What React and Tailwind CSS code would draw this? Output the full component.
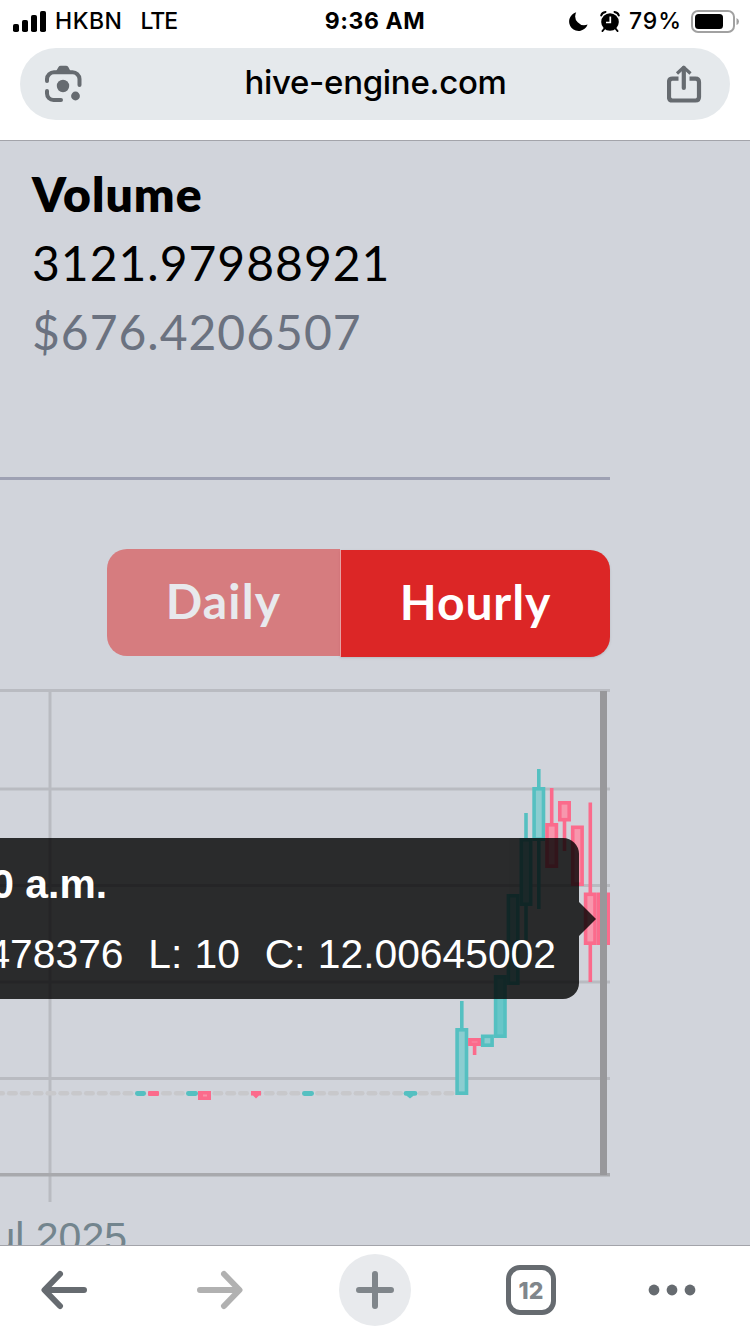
const GREY = "#666b70";
const TEAL = "#55c0c1";
const PINK = "#fb6b8c";

// x is the centre of the candle
const candles = [
  { x: 461.8, top: 1028, bottom: 1095, high: 1001, low: 1095, up: true },
  { x: 474.6, top: 1038, bottom: 1046, high: 1038, low: 1055, up: false },
  { x: 487.4, top: 1034.5, bottom: 1047, high: 1035, low: 1047, up: true },
  { x: 500.3, top: 975, bottom: 1038, high: 975, low: 1038, up: true, dense: true },
  { x: 513.1, top: 894, bottom: 985, high: 894, low: 985, up: true },
  { x: 526, top: 838, bottom: 906, high: 813, low: 940, up: true },
  { x: 538.8, top: 787, bottom: 841, high: 769, low: 909, up: true },
  { x: 551.7, top: 823, bottom: 868, high: 788, low: 868, up: false },
  { x: 564.5, top: 801, bottom: 821.5, high: 801, low: 851, up: false },
  { x: 577.4, top: 825.5, bottom: 886, high: 826, low: 886, up: false },
  { x: 590.3, top: 892.5, bottom: 945, high: 802.5, low: 982, up: false },
  { x: 603.5, top: 892.5, bottom: 945, high: 892.5, low: 945, up: false, dense: true },
];

const emptyHours = Array.from({ length: 36 }, (_, i) => 461.8 - 12.84 * (i + 1));

function Candle({ x, top, bottom, high, low, up, dense }) {
  const color = up ? TEAL : PINK;
  let fill = up ? "#8bcdd0" : "#f797ad";
  if (dense) fill = up ? "#68c6c8" : "#f9809b";
  return (
    <g stroke={ color } strokeWidth="3.6">
      <line x1={ x } x2={ x } y1={ high } y2={ low } />
      <rect x={ x - 4.7 } y={ top + 1.8 } width="9.4" height={ bottom - top - 3.6 } fill={ fill } />
    </g>
  );
}

function PriceChart() {
  return (
    <svg viewBox="0 680 610 530" className="block w-[610px] h-[530px]">
      <g stroke="#b9bbc1" strokeWidth="3">
        <line x1="0" x2="610" y1="690.5" y2="690.5" />
        <line x1="0" x2="610" y1="789" y2="789" />
        <line x1="0" x2="610" y1="885.5" y2="885.5" />
        <line x1="0" x2="610" y1="982" y2="982" />
        <line x1="0" x2="610" y1="1078.5" y2="1078.5" />
        <line x1="50" x2="50" y1="690" y2="1202" />
      </g>
      <line x1="0" x2="610" y1="1174.8" y2="1174.8" stroke="#a8a9ad" strokeWidth="3.4" />

      { emptyHours.map((x) => (
        <rect key={ x } x={ x - 5.5 } y="1091" width="11" height="4.6" rx="2.3" fill="#c8c8cb" />
      )) }

      <g fill={ TEAL }>
        <rect x="135" y="1091" width="11" height="5" rx="2.4" />
        <rect x="186" y="1091" width="12" height="5" rx="2.4" />
        <rect x="302" y="1091" width="12" height="5" rx="2.4" />
        <path d="M406 1091h9a2.3 2.3 0 0 1 0 4.8h-1.5l-3.5 2.6-3.5-2.6h-.5a2.3 2.3 0 0 1 0-4.8z" />
      </g>
      <g fill={ PINK }>
        <rect x="148" y="1091" width="11" height="5" rx="1" />
        <rect x="198" y="1091" width="13" height="9" />
        <rect x="203" y="1094.5" width="4" height="2" fill="#fa91a8" />
        <path d="M251 1091h10v4.5h-2l-3 3-3-3h-2z" />
      </g>

      { candles.map((candle) => <Candle key={ candle.x } { ...candle } />) }
      <rect x="600" y="691" width="7" height="484" fill="#98989b" />
    </svg>
  );
}

function Tooltip() {
  return (
    <div className="absolute left-0 top-[158px] flex items-center opacity-80">
      <div className="w-[579px] h-[161px] rounded-r-[16px] bg-black" />
      <svg viewBox="0 0 17 34" className="w-[17px] h-[34px]">
        <path d="M0 0L17 17L0 34z" fill="#000" />
      </svg>
    </div>
  );
}

function TooltipText() {
  return (
    <div className="absolute left-0 top-[158px] w-[579px] h-[161px] pt-[23px] pr-[23px] overflow-hidden text-white text-[40.8px] font-['Liberation_Sans',sans-serif] whitespace-pre">
      <div className="flex justify-end w-[107px] h-[46px] leading-[46px] font-bold">0 a.m.</div>
      <div className="flex justify-end mt-[24px] h-[46px] leading-[46px] [word-spacing:1px]">478376  L: 10  C: 12.00645002</div>
    </div>
  );
}

function StatusBar() {
  return (
    <div className="grid grid-cols-[1fr_auto_1fr] items-center h-10 text-[23px] leading-[42px] font-medium">
      <div className="flex items-center pl-[13px]">
        <svg viewBox="0 0 33 21" className="w-[33px] h-[21px]">
          <rect x="0" y="13" width="6" height="8" rx="1.8" />
          <rect x="9" y="9" width="6" height="12" rx="1.8" />
          <rect x="18" y="4" width="6" height="17" rx="1.8" />
          <rect x="27" y="0" width="6" height="21" rx="1.8" />
        </svg>
        <span className="ml-[9px] tracking-[0.5px]">HKBN</span>
        <span className="ml-[18px] tracking-[-1px]">LTE</span>
      </div>
      <span className="font-bold tracking-[0.6px]">9:36 AM</span>
      <div className="flex items-center justify-end pr-[11px]">
        <svg viewBox="0 0 19 19" className="w-[19px] h-[19px]">
          <path d="M7.2 .3A9.5 9.5 0 1 0 18.6 12.6A9 9 0 0 1 7.2 .3z" />
        </svg>
        <svg viewBox="0 0 20 21" className="ml-[12px] w-[20px] h-[21px]">
          <circle cx="10" cy="11" r="8.8" />
          <path d="M1.2 4.5Q2 1.5 5.5 1M18.8 4.5Q18 1.5 14.5 1M4.5 17.5L2.5 20M15.5 17.5L17.5 20" fill="none" stroke="#000" strokeWidth="2" strokeLinecap="round" />
          <path d="M10.3 5.5V11.5H6" fill="none" stroke="#fff" strokeWidth="1.7" />
        </svg>
        <span className="ml-[9px] tracking-[0.9px]">79%</span>
        <svg viewBox="0 0 48 23" className="ml-[9px] w-[48px] h-[23px]">
          <rect x="1" y="1" width="42" height="21" rx="6" fill="none" stroke="#a1a1a1" strokeWidth="2" />
          <rect x="4" y="4" width="28" height="15" rx="3.5" />
          <path d="M45.5 8q2.5 1 2.5 3.5t-2.5 3.5z" fill="#a1a1a1" />
        </svg>
      </div>
    </div>
  );
}

function AddressBar() {
  return (
    <div className="flex items-center justify-between mx-5 mt-2 h-[72px] pl-[24px] pr-[28px] rounded-full bg-[#e5e9ec]">
      <svg viewBox="44 65 38 38" className="w-[38px] h-[38px]" fill="none" stroke={ GREY } strokeWidth="4" strokeLinecap="round">
        <path d="M47 81V79a7 7 0 0 1 7-6.7H72.5a7 7 0 0 1 7 6.7V85" />
        <path d="M47 91V93.5a6.5 6.5 0 0 0 6.5 6.5H61" />
        <path d="M55 73L58.5 67Q59.2 65.7 60.7 65.7H66Q67.5 65.7 68.3 67L71.5 73z" fill={ GREY } stroke="none" />
        <circle cx="63" cy="86" r="6.2" fill={ GREY } stroke="none" />
        <circle cx="75.5" cy="96" r="4.4" fill={ GREY } stroke="none" />
      </svg>
      <span className="pb-[4px] pl-[2px] text-[33px] leading-10 font-[540] tracking-[-0.3px]">hive-engine.com</span>
      <svg viewBox="667 65 35 38" className="w-[35px] h-[38px]" fill="none" stroke={ GREY } strokeWidth="4.2">
        <path d="M678.5 78.7H672.5Q669 78.7 669 82.2V97Q669 100.5 672.5 100.5H695.5Q699 100.5 699 97V82.2Q699 78.7 695.5 78.7H689.5" />
        <path d="M683.8 88V68" strokeLinecap="round" />
        <path d="M677 73.5L683.8 67.3L690.5 73.5" strokeWidth="3.2" strokeLinejoin="round" />
      </svg>
    </div>
  );
}

function BottomBar() {
  return (
    <nav className="flex items-center h-[88px] pl-[40px] bg-white">
      <svg viewBox="0 0 48 40" className="w-[48px] h-[40px]" fill="none" stroke={ GREY } strokeWidth="6" strokeLinecap="round" strokeLinejoin="round">
        <path d="M44 20H5M20 4L4.5 20L20 36" />
      </svg>
      <svg viewBox="0 0 48 40" className="w-[48px] h-[40px] ml-[108px]" fill="none" stroke="#b1b1b1" strokeWidth="6" strokeLinecap="round" strokeLinejoin="round">
        <path d="M4 20H43M28 4L43.5 20L28 36" />
      </svg>
      <div className="flex items-center justify-center ml-[95px] w-[72px] h-[72px] rounded-full bg-[#e8eaed]">
        <svg viewBox="0 0 38 38" className="w-[38px] h-[38px]" stroke="#80868b" strokeWidth="6" strokeLinecap="round">
          <path d="M3 19H35M19 3V35" />
        </svg>
      </div>
      <div className="flex items-center justify-center ml-[95px] w-[50px] h-[50px] rounded-[14px] border-[5px] border-[#666b70] pt-[2px] text-[23px] font-extrabold text-[#80868b]">
        12
      </div>
      <svg viewBox="0 0 48 12" className="ml-[92px] w-[48px] h-[12px]" fill={ GREY }>
        <circle cx="6" cy="6" r="5.4" />
        <circle cx="24" cy="6" r="5.4" />
        <circle cx="42" cy="6" r="5.4" />
      </svg>
    </nav>
  );
}

export default function App() {
  return (
    <div className="w-[750px] h-[1334px] overflow-hidden bg-white text-black font-['Inter',sans-serif]">
      <header className="h-[140px]">
        <StatusBar />
        <AddressBar />
      </header>

      <main className="h-[1106px] overflow-hidden border-y border-[#a3a4aa] bg-[#d1d4db] font-['Lato',sans-serif]">
        <section className="pt-[18px] pl-[32px] h-[336px] text-[48px] leading-[69px]">
          <h2 className="h-[69px] font-extrabold tracking-[1px]">Volume</h2>
          <p className="h-[69px] tracking-[1px]">3121.97988921</p>
          <p className="h-[69px] text-[#6b7280] tracking-[1px]">$676.4206507</p>
        </section>
        <div className="w-[610px] h-[3px] bg-[#9ea1b3]" />

        <div className="flex w-[610px] mt-[69px] pl-[107px] h-[108px] text-[48px] font-bold text-white">
          <button className="w-[233px] h-[107px] pb-[3px] rounded-l-[20px] bg-[#dc2626] opacity-50 tracking-[1.2px]">Daily</button>
          <button className="w-[270px] h-[107px] mt-px pb-[4px] rounded-r-[20px] bg-[#dc2626] border-l border-[#e6a0a2] shadow-sm tracking-[0.9px]">Hourly</button>
        </div>

        <div className="relative w-[610px] mt-[23px]">
          <PriceChart />
          <Tooltip />
          <TooltipText />
        </div>
        <div className="-ml-[28px] mt-[4px] text-[41px] leading-[46px] text-[#73858e] whitespace-pre font-['Liberation_Sans',sans-serif]">Jul 2025</div>
      </main>

      <BottomBar />
    </div>
  );
}
